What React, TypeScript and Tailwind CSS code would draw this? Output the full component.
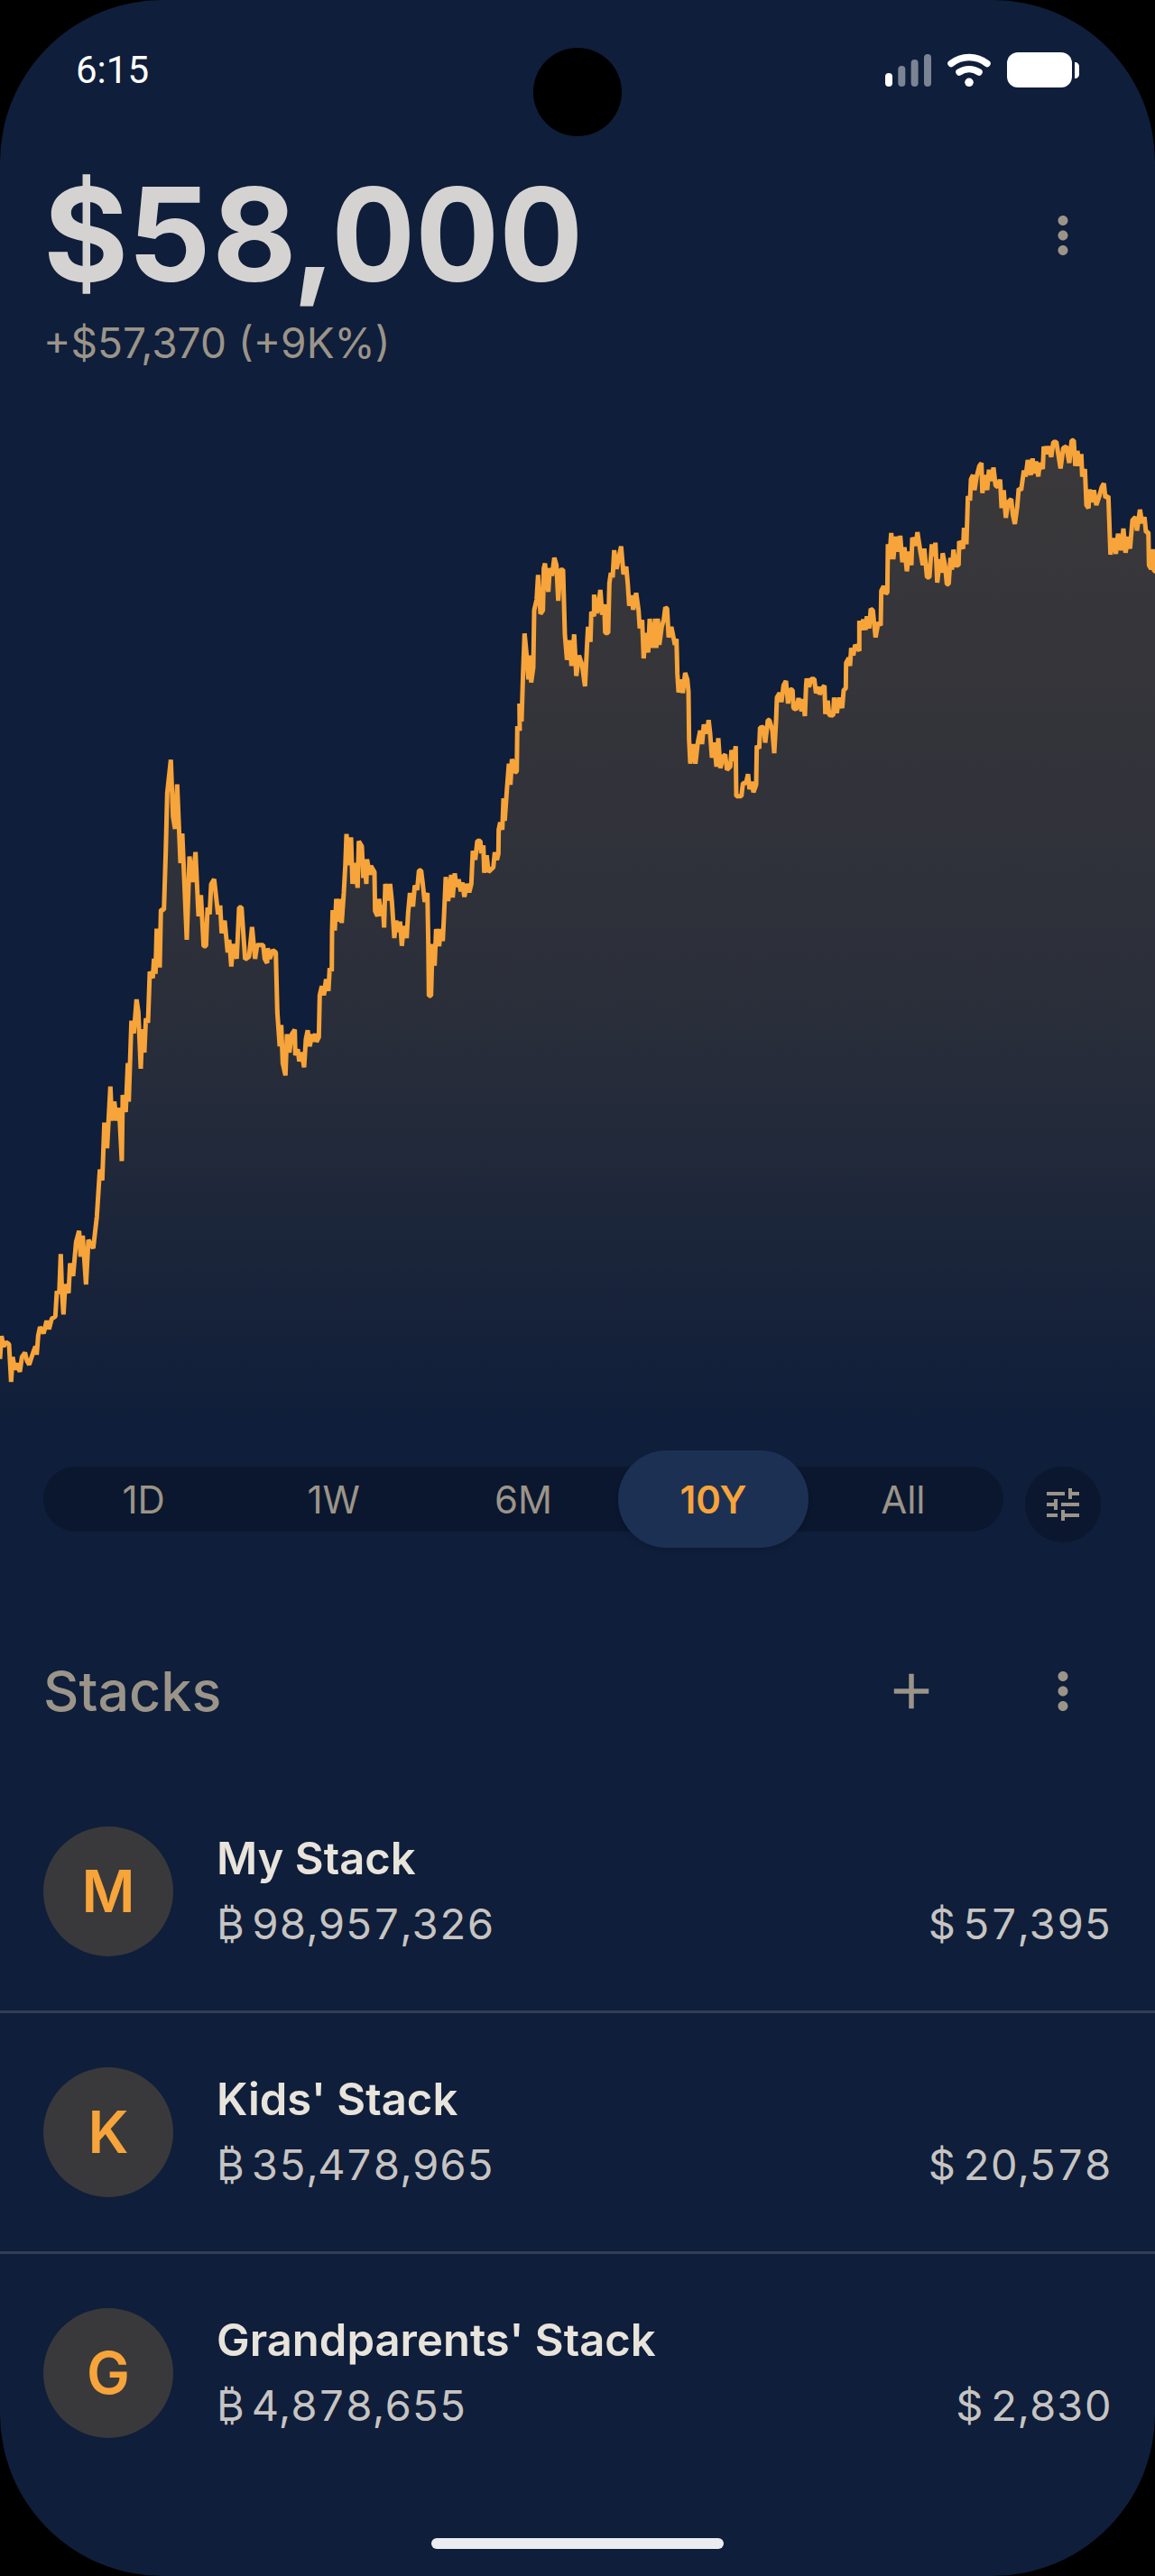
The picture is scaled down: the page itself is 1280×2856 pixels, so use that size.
import { MdAdd, MdMoreVert, MdTune } from "react-icons/md";

type Stack = {
  name: string;
  sats: string;
  fiat: string;
};

const stacks: Stack[] = [
  { name: "My Stack", sats: "98,957,326", fiat: "57,395" },
  { name: "Kids' Stack", sats: "35,478,965", fiat: "20,578" },
  { name: "Grandparents' Stack", sats: "4,878,655", fiat: "2,830" },
];

const ranges = ["1D", "1W", "6M", "10Y", "All"];
const activeRange = "10Y";

const pricePoints =
  "0,3140 5,3064 12,3098 20,3084 30,3091 37,3216 42,3133 50,3176 58,3154 66,3183 73,3133 83,3119 90,3147 97,3159 110,3119 118,3098 122,3126 127,3062 133,3034 145,3055 155,3013 163,3041 172,3006 184,2999 189,2914 197,2921 202,2791 206,2918 211,2992 217,2892 228,2921 233,2822 243,2864 253,2751 263,2714 268,2800 275,2730 286,2892 294,2744 310,2772 322,2666 332,2510 340,2546 347,2354 356,2439 367,2234 372,2347 380,2284 388,2347 396,2305 405,2482 408,2262 418,2319 425,2156 428,2284 437,2015 445,2057 454,1944 460,1986 468,2175 473,2043 480,2121 485,2007 492,2022 498,1852 508,1873 512,1809 517,1859 521,1709 531,1838 535,1646 545,1646 551,1455 556,1257 568,1147 575,1335 582,1377 589,1229 600,1491 606,1392 615,1604 621,1746 630,1469 640,1554 650,1454 660,1668 668,1597 677,1767 685,1767 690,1639 697,1661 702,1561 712,1544 725,1661 732,1632 737,1724 747,1682 757,1788 762,1746 769,1835 775,1760 787,1809 795,1638 803,1638 815,1811 828,1802 838,1703 848,1809 855,1763 875,1763 880,1809 888,1823 890,1774 897,1809 907,1780 917,1788 922,1986 930,2100 935,2029 940,2156 949,2197 954,2060 962,2121 970,2060 " +
  "980,2045 982,2130 990,2110 995,2150 1003,2120 1011,2170 1017,2075 1023,2047 1030,2100 1037,2060 1043,2085 1048,2058 1052,2085 1060,2070 1063,1930 1070,1900 1077,1930 1084,1877 1092,1916 1096,1840 1103,1850 1104,1720 1106,1647 1113,1715 1118,1610 1128,1685 1130,1610 1136,1690 1143,1590 1148,1500 1152,1394 1160,1498 1167,1405 1172,1560 1180,1490 1189,1573 1193,1418 1203,1435 1208,1540 1213,1495 1218,1560 1220,1478 1230,1530 1233,1500 1245,1520 1247,1650 1255,1667 1260,1610 1268,1667 1273,1630 1277,1705 1281,1560 1292,1615 1297,1560 1303,1620 1311,1740 1317,1682 1325,1720 1330,1685 1336,1766 1342,1700 1352,1740 1357,1655 1363,1590 1373,1635 1379,1565 1387,1580 1393,1515 1400,1515 1405,1555 1412,1620 1421,1590 1424,1760 1426,1932 1433,1932 1438,1760 1445,1832 1450,1710 1460,1767 1465,1710 1472,1750 1476,1670 1482,1537 1490,1617 1500,1530 1505,1605 1512,1525 1517,1570 1525,1545 1532,1585 1537,1555 1544,1603 1552,1560 1560,1588 1567,1560 1572,1450 1580,1480 1587,1417 1597,1417 1600,1458 1607,1432 1610,1523 1618,1465 1624,1520 " +
  "1640,1505 1645,1455 1652,1480 1657,1460 1658,1380 1663,1355 1670,1380 1674,1275 1678,1350 1685,1250 1692,1160 1697,1230 1702,1145 1712,1190 1718,1185 1720,1035 1728,1050 1727,960 1734,1020 1739,860 1744,727 1750,790 1757,880 1762,800 1766,890 1773,840 1776,650 1784,615 1789,532 1797,662 1805,650 1808,510 1812,494 1818,565 1823,588 1828,510 1835,535 1843,475 1850,500 1856,618 1863,515 1872,515 1878,730 1885,815 1895,750 1900,835 1909,730 1916,868 1925,800 1935,830 1945,903 1952,760 1955,705 1963,755 1966,655 1975,670 1975,598 1985,660 1990,625 1996,582 2002,665 2009,630 2012,725 2022,725 2026,560 2031,525 2037,540 2042,450 2050,512 2058,470 2065,437 2073,530 2082,505 2087,560 2092,635 2100,600 2105,648 2115,592 2123,650 2127,710 2135,682 2140,810 2147,725 2155,790 2160,678 2170,775 2178,678 2182,775 2187,678 2192,765 2200,705 2207,680 2212,640 2218,645 2223,740 2232,705 2244,765 2249,745 2252,860 2256,923 2265,880 2270,925 2278,858 2285,880 2289,920 2291,1080 2295,1160 2305,1095 2312,1160 2320,1090 2328,1050 2334,1095 2340,1030 2350,1060 2356,1015 2361,1060 2367,1140 2375,1090 2382,1170 2388,1075 2395,1175 2405,1135 2411,1130 2417,1180 2428,1170 2432,1115 2440,1150 2446,1102 2448,1268 2465,1268 2470,1225 2480,1225 2487,1195 2492,1245 2500,1220 2505,1255 2514,1230 2516,1100 2524,1110 2527,1040 2538,1038 2544,1090 2553,1015 2558,1015 2568,1050 2574,1125 2580,1020 " +
  "2583,940 2592,925 2598,955 2605,900 2613,885 2620,960 2627,912 2635,915 2638,975 2647,980 2655,942 2665,985 2670,945 2676,1002 2680,900 2682,877 2690,905 2697,878 2707,878 2713,925 2723,905 2725,930 2733,910 2741,900 2744,995 2752,950 2757,998 2770,1000 2773,940 2782,992 2790,940 2800,975 2805,915 2812,910 2813,825 2822,808 2826,835 2830,775 2837,800 2843,765 2857,785 2857,685 2865,715 2870,680 2878,715 2882,670 2890,710 2895,645 2902,650 2911,740 2920,690 2928,700 2930,585 2938,570 2945,595 2950,590 2952,430 2957,480 2963,393 2970,480 2977,405 2985,455 2993,402 3000,490 3007,440 3015,520 3023,455 3030,500 3033,408 3045,435 3050,390 3060,455 3068,500 3073,445 3082,540 3090,540 3098,430 3105,470 3110,425 3116,558 3125,480 3130,525 3134,460 3142,500 3148,563 3154,563 3160,475 3165,515 3170,448 3177,500 3187,500 3189,420 3202,445 3205,375 3213,430 3218,270 3225,285 3228,215 3235,200 3240,250 3247,205 3256,170 3263,160 3266,260 3275,200 3282,250 3288,182 3295,220 3303,175 3310,235 3317,240 3325,215 3330,310 3337,250 3344,342 3352,290 3362,280 3367,330 3374,363 3382,305 3387,245 3395,250 3404,185 3410,205 3417,150 3427,200 3433,145 3440,195 3445,155 3452,205 3457,160 3467,180 3470,105 3478,130 3485,105 3495,140 3502,90 3512,90 3520,140 3526,178 3535,110 3545,105 3555,160 3563,85 3570,85 3575,170 3582,120 3590,170 3595,130 3598,205 3607,180 3612,300 3619,310 3622,248 3630,290 3637,250 3645,300 3655,270 3663,240 3670,228 3675,275 3685,270 3692,465 3700,410 3710,462 3717,395 3727,450 3735,378 3742,458 3752,405 3757,445 3765,350 3775,340 3780,385 3790,315 3797,360 3805,340 3810,390 3818,390 3820,500 3827,512 3832,447 3837,520 3840,520";

function StatusBar() {
  return (
    <div className="flex h-[153px] items-start justify-between pl-[84px] pr-[83px] pt-[50px]">
      <span className="font-['Roboto',sans-serif] text-[42px] leading-[56px] text-white">6:15</span>
      <svg width="216" height="42" viewBox="0 0 216 42" className="mt-[7px]" aria-hidden="true">
        <rect x="0" y="24" width="8" height="15" rx="4" fill="#fff" />
        <rect x="14.3" y="16" width="8" height="23" rx="4" fill="#7b8494" />
        <rect x="28.6" y="9" width="8" height="30" rx="4" fill="#7b8494" />
        <rect x="43" y="3" width="8" height="36" rx="4" fill="#7b8494" />
        <path d="M73 13.5a32 32 0 0 1 40 0" fill="none" stroke="#fff" strokeWidth="7.5" strokeLinecap="round" />
        <path d="M82 23a20.5 20.5 0 0 1 22 0" fill="none" stroke="#fff" strokeWidth="7.5" strokeLinecap="round" />
        <circle cx="93" cy="34.3" r="4.8" fill="#fff" />
        <rect x="135" y="1" width="72" height="39" rx="12" fill="#fff" />
        <path d="M210 12c3 0 5 2 5 5v8c0 3-2 5-5 5z" fill="#fff" />
      </svg>
    </div>
  );
}

function PriceChart() {
  return (
    <svg viewBox="0 0 3840 3360" className="block w-full" role="img" aria-label="Portfolio value">
      <defs>
        <linearGradient id="area" gradientUnits="userSpaceOnUse" x1="0" y1="85" x2="0" y2="3360">
          <stop offset="0" stopColor="#3a383a" />
          <stop offset="0.2" stopColor="#3a383a" stopOpacity="0.9" />
          <stop offset="0.4" stopColor="#3a383a" stopOpacity="0.78" />
          <stop offset="0.56" stopColor="#3a383a" stopOpacity="0.65" />
          <stop offset="0.75" stopColor="#3a383a" stopOpacity="0.38" />
          <stop offset="1" stopColor="#3a383a" stopOpacity="0" />
        </linearGradient>
      </defs>
      <polygon points={`0,3360 ${pricePoints} 3840,3360`} fill="url(#area)" />
      <polyline
        points={pricePoints}
        fill="none"
        stroke="#f7a43a"
        strokeWidth="15"
        strokeLinejoin="bevel"
      />
    </svg>
  );
}

function RangePicker() {
  return (
    <div className="flex items-start gap-6 pl-12 pr-[60px]">
      <div className="flex h-[72px] flex-1 items-center rounded-full bg-[#0b172e] px-[6px]">
        {ranges.map((range) => (
          <button
            key={range}
            type="button"
            aria-pressed={range === activeRange}
            className={
              range === activeRange
                ? "h-[108px] flex-1 rounded-[54px] bg-[#1c3054] text-[42px] font-semibold text-[#f7a43a] shadow-md"
                : "h-[72px] flex-1 text-[42px] text-[#9b9489]"
            }
          >
            {range}
          </button>
        ))}
      </div>
      <button
        type="button"
        aria-label="Chart settings"
        className="flex size-[84px] items-center justify-center rounded-full bg-[#0b172e] text-[#9b9489]"
      >
        <MdTune size={48} />
      </button>
    </div>
  );
}

function StackRow({ stack }: { stack: Stack }) {
  return (
    <li className="flex gap-12 border-b-[3px] border-[#333d56] px-12 py-[60px] last:border-b-0">
      <div className="flex size-36 items-center justify-center rounded-full bg-[#39393b] text-[64px] font-semibold text-[#f7a43a]">
        {stack.name[0]}
      </div>
      <div className="flex-1 leading-[72px]">
        <h3 className="text-[49px] font-semibold text-[#e8e4dc]">{stack.name}</h3>
        <div className="flex justify-between text-[47px] tabular-nums text-[#c6c4c2]">
          <span className="flex gap-2">
            <span>₿</span>
            <span>{stack.sats}</span>
          </span>
          <span className="flex gap-2">
            <span>$</span>
            <span>{stack.fiat}</span>
          </span>
        </div>
      </div>
    </li>
  );
}

export default function App() {
  return (
    <div className="min-h-screen bg-black font-['Inter',sans-serif]">
      <main className="relative flex min-h-screen flex-col overflow-hidden rounded-[180px] bg-[#0f1e3a]">
        <div className="absolute left-1/2 top-[53px] size-[98px] -translate-x-1/2 rounded-full bg-black" />
        <StatusBar />

        <header className="flex h-[307px] items-start justify-between pl-12 pr-[69px] pt-[27px]">
          <div>
            <h1 className="text-[144px] font-bold tabular-nums leading-[160px] text-[#d5d3d1]">$58,000</h1>
            <p className="mt-[7px] text-[46px] leading-[66px] text-[#9b9489]">+$57,370 (+9K%)</p>
          </div>
          <button type="button" aria-label="Portfolio menu" className="mt-12 text-[#9b9489]">
            <MdMoreVert size={66} />
          </button>
        </header>

        <PriceChart />

        <div className="mt-[46px]">
          <RangePicker />
        </div>

        <section className="mt-[120px]">
          <div className="flex h-[90px] items-center justify-between pl-12 pr-[69px]">
            <h2 className="text-[61px] font-medium leading-[90px] text-[#9b9489]">Stacks</h2>
            <div className="flex gap-[102px] text-[#9b9489]">
              <button type="button" aria-label="Add stack">
                <MdAdd size={66} />
              </button>
              <button type="button" aria-label="Stacks menu">
                <MdMoreVert size={66} />
              </button>
            </div>
          </div>
          <ul className="mt-[45px]">
            {stacks.map((stack) => (
              <StackRow key={stack.name} stack={stack} />
            ))}
          </ul>
        </section>

        <div className="mx-auto mb-[30px] mt-auto h-3 w-[324px] rounded-full bg-[#ebecf0]" />
      </main>
    </div>
  );
}
